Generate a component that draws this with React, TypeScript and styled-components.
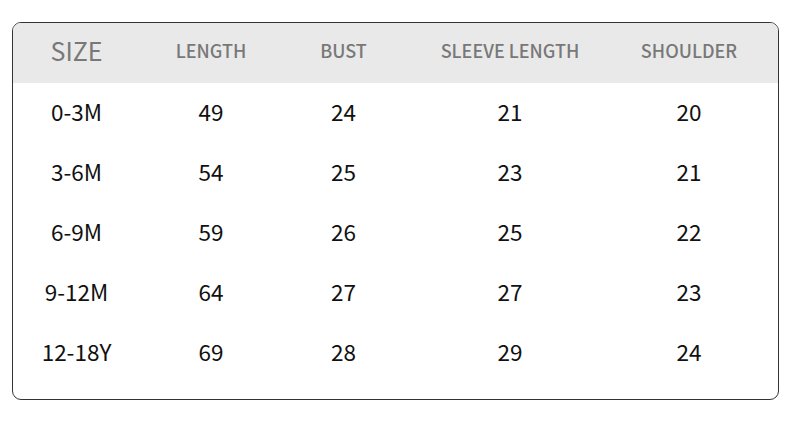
import styled, { createGlobalStyle } from "styled-components";

const GlobalStyle = createGlobalStyle`
  html, body {
    margin: 0;
    padding: 0;
    background: #ffffff;
  }
  body {
    font-family: "Noto Sans CJK SC", "Noto Sans", sans-serif;
  }
`;

const Page = styled.div`
  width: 790px;
  height: 423px;
  padding: 22px 11px 0 12px;
  box-sizing: border-box;
`;

const Card = styled.div`
  width: 767px;
  height: 378px;
  box-sizing: border-box;
  border: 1px solid #333333;
  border-radius: 9px;
  overflow: hidden;
  display: flex;
  flex-direction: column;
`;

const Row = styled.div<{ $header?: boolean }>`
  display: grid;
  grid-template-columns: 127px 142px 123px 210px 148px;
  height: 60px;
  align-items: center;
  background: ${(p) => (p.$header ? "#e9e9e9" : "transparent")};
`;

const HeadCell = styled.div<{ $big?: boolean }>`
  text-align: center;
  color: #787878;
  font-size: ${(p) => (p.$big ? "25px" : "18px")};
  font-weight: ${(p) => (p.$big ? 400 : 500)};
  margin-top: -6px;
`;

const Cell = styled.div`
  text-align: center;
  color: #111111;
  font-size: 22.5px;
  margin-top: -5px;
`;

const Body = styled.div`
  display: flex;
  flex-direction: column;
`;

const headers = ["SIZE", "LENGTH", "BUST", "SLEEVE LENGTH", "SHOULDER"];

const rows = [
  ["0-3M", "49", "24", "21", "20"],
  ["3-6M", "54", "25", "23", "21"],
  ["6-9M", "59", "26", "25", "22"],
  ["9-12M", "64", "27", "27", "23"],
  ["12-18Y", "69", "28", "29", "24"],
];

export default function App() {
  return (
    <>
      <GlobalStyle />
      <Page>
        <Card>
          <Row $header>
            {headers.map((h, i) => (
              <HeadCell key={h} $big={i === 0}>
                {h}
              </HeadCell>
            ))}
          </Row>
          <Body>
            {rows.map((r) => (
              <Row key={r[0]}>
                {r.map((v, i) => (
                  <Cell key={i}>{v}</Cell>
                ))}
              </Row>
            ))}
          </Body>
        </Card>
      </Page>
    </>
  );
}
